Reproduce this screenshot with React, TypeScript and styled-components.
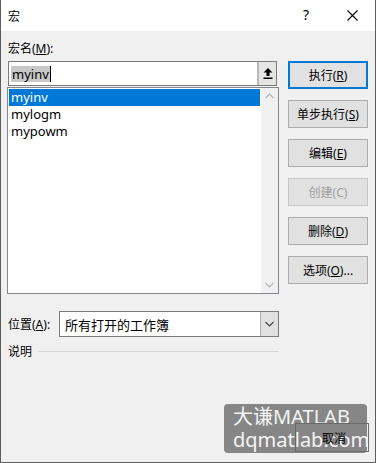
import styled, { createGlobalStyle } from 'styled-components';

const Global = createGlobalStyle`
  html, body { margin: 0; padding: 0; background: #ffffff; }
  * { box-sizing: border-box; }
`;

const Window = styled.div`
  position: relative;
  width: 376px;
  height: 463px;
  display: flex;
  flex-direction: column;
  background: #f0f0f0;
  border-left: 1px solid #5e5e5e;
  border-right: 1px solid #5e5e5e;
  border-bottom: 1px solid #5e5e5e;
  font-family: "Noto Sans", "Noto Sans CJK SC", sans-serif;
  font-size: 12px;
  color: #000;
  overflow: hidden;
`;

const TitleBar = styled.div`
  height: 31px;
  flex: none;
  display: flex;
  align-items: center;
  background: #ffffff;
  padding-left: 7px;
`;

const Title = styled.span`
  flex: 1;
  font-size: 12px;
`;

const HelpMark = styled.span`
  width: 46px;
  text-align: center;
  font-size: 14px;
  margin-top: -2px;
`;

const CloseBox = styled.span`
  width: 46px;
  height: 31px;
  display: flex;
  align-items: center;
  justify-content: center;
`;

const Body = styled.div`
  display: flex;
  gap: 9px;
  padding: 10px 0 0 6px;
`;

const LeftColumn = styled.div`
  width: 272px;
  display: flex;
  flex-direction: column;
`;

const FieldLabel = styled.div`
  height: 16px;
  line-height: 16px;
  padding-left: 1px;
`;

const InputRow = styled.div`
  margin: 4px 2px 1px 1px;
  height: 25px;
  display: flex;
  border: 1px solid #7a7a7a;
  background: #fff;
`;

const TextBox = styled.div`
  flex: 1;
  display: flex;
  align-items: center;
  padding-left: 2px;
  font-size: 13px;
`;

const Selected = styled.span`
  background: #c8c8c8;
  line-height: 16px;
  padding: 0 1px;
`;

const Caret = styled.span`
  width: 1px;
  height: 16px;
  background: #000;
`;

const CollapseButton = styled.div`
  width: 19px;
  display: flex;
  align-items: center;
  justify-content: center;
  background: #e5e5e5;
  border-left: 2px solid #b8b8b8;
`;

const ListBox = styled.div`
  height: 207px;
  display: flex;
  border: 1px solid #828790;
  background: #fff;
`;

const Items = styled.div`
  flex: 1;
  padding: 1px;
`;

const Item = styled.div<{ $active?: boolean }>`
  height: 17px;
  line-height: 17px;
  padding-left: 2px;
  font-size: 13px;
  background: ${p => (p.$active ? '#0078d7' : 'transparent')};
  color: ${p => (p.$active ? '#ffffff' : '#000')};
`;

const ScrollBar = styled.div`
  width: 17px;
  background: #f0f0f0;
  display: flex;
  flex-direction: column;
  justify-content: space-between;
  align-items: center;
  padding: 5px 0;
`;

const LocationRow = styled.div`
  margin-top: 17px;
  display: flex;
  align-items: center;
  height: 26px;
`;

const LocationLabel = styled.span`
  width: 52px;
  padding-left: 1px;
`;

const Select = styled.div`
  flex: 1;
  height: 26px;
  display: flex;
  border: 1px solid #7a7a7a;
  background: #fff;
`;

const SelectText = styled.div`
  flex: 1;
  display: flex;
  align-items: center;
  padding-left: 5px;
  font-size: 13px;
`;

const DropButton = styled.div`
  width: 18px;
  display: flex;
  align-items: center;
  justify-content: center;
  background: #e1e1e1;
  border-left: 1px solid #b0b0b0;
`;

const DescRow = styled.div`
  margin-top: 6px;
  height: 16px;
  display: flex;
  align-items: center;
  gap: 6px;
  padding-left: 1px;
`;

const Rule = styled.div`
  flex: 1;
  height: 1px;
  background: #d6d6d6;
`;

const ButtonColumn = styled.div`
  width: 80px;
  display: flex;
  flex-direction: column;
  gap: 11px;
  padding-top: 20px;
`;

const Button = styled.div<{ $primary?: boolean; $disabled?: boolean }>`
  height: 28px;
  display: flex;
  align-items: center;
  justify-content: center;
  background: #e1e1e1;
  border: ${p => (p.$primary ? '2px solid #0078d7' : p.$disabled ? '1px solid #c6c6c6' : '1px solid #adadad')};
  color: ${p => (p.$disabled ? '#a0a0a0' : '#000')};
`;

const Footer = styled.div`
  margin-top: auto;
  display: flex;
  justify-content: flex-end;
  padding: 0 6px 10px 0;
`;

/* the cancel button shows through the watermark: its face is tinted, its text stays dark */
const CancelButton = styled(Button)`
  position: relative;
  z-index: 1;
  width: 74px;
  height: 29px;
  background: transparent;
  border-color: #6a6a6a;
  padding: 0 0 0 4px;
`;

const Watermark = styled.div`
  position: absolute;
  left: 223px;
  top: 404px;
  width: 143px;
  height: 49px;
  border-radius: 4px;
  background: rgba(108, 108, 108, 0.8);
  color: #f4f4f4;
  font-family: "Noto Sans", "Noto Sans CJK SC", sans-serif;
  font-size: 20px;
  line-height: 23px;
  padding: 1px 0 0 9px;
`;

function Chevron({ up, color = '#b4b4b4' }: { up?: boolean; color?: string }) {
  return (
    <svg width="9" height="6" viewBox="0 0 9 6">
      <path d={up ? 'M0.5 5 L4.5 1 L8.5 5' : 'M0.5 1 L4.5 5 L8.5 1'} fill="none" stroke={color} strokeWidth="1.2" />
    </svg>
  );
}

export default function App() {
  return (
    <Window>
      <Global />
      <TitleBar>
        <Title>宏</Title>
        <HelpMark>?</HelpMark>
        <CloseBox>
          <svg width="11" height="11" viewBox="0 0 11 11">
            <path d="M0.5 0.5 L10.5 10.5 M10.5 0.5 L0.5 10.5" stroke="#000" strokeWidth="1.1" />
          </svg>
        </CloseBox>
      </TitleBar>
      <Body>
        <LeftColumn>
          <FieldLabel>宏名(<u>M</u>):</FieldLabel>
          <InputRow>
            <TextBox>
              <Selected>myinv</Selected>
              <Caret />
            </TextBox>
            <CollapseButton>
              <svg width="10" height="11" viewBox="0 0 10 11">
                <path d="M5 0 L9.5 4.5 L6.5 4.5 L6.5 8 L3.5 8 L3.5 4.5 L0.5 4.5 Z" fill="#000" />
                <rect x="0.5" y="9.5" width="9" height="1.5" fill="#000" />
              </svg>
            </CollapseButton>
          </InputRow>
          <ListBox>
            <Items>
              <Item $active>myinv</Item>
              <Item>mylogm</Item>
              <Item>mypowm</Item>
            </Items>
            <ScrollBar>
              <Chevron up />
              <Chevron />
            </ScrollBar>
          </ListBox>
          <LocationRow>
            <LocationLabel>位置(<u>A</u>):</LocationLabel>
            <Select>
              <SelectText>所有打开的工作簿</SelectText>
              <DropButton>
                <Chevron color="#444" />
              </DropButton>
            </Select>
          </LocationRow>
          <DescRow>
            说明
            <Rule />
          </DescRow>
        </LeftColumn>
        <ButtonColumn>
          <Button $primary>执行(<u>R</u>)</Button>
          <Button>单步执行(<u>S</u>)</Button>
          <Button>编辑(<u>E</u>)</Button>
          <Button $disabled>创建(C)</Button>
          <Button>删除(<u>D</u>)</Button>
          <Button>选项(<u>O</u>)...</Button>
        </ButtonColumn>
      </Body>
      <Footer>
        <CancelButton>取消</CancelButton>
      </Footer>
      <Watermark>
        大谦MATLAB
        <br />
        dqmatlab.com
      </Watermark>
    </Window>
  );
}
